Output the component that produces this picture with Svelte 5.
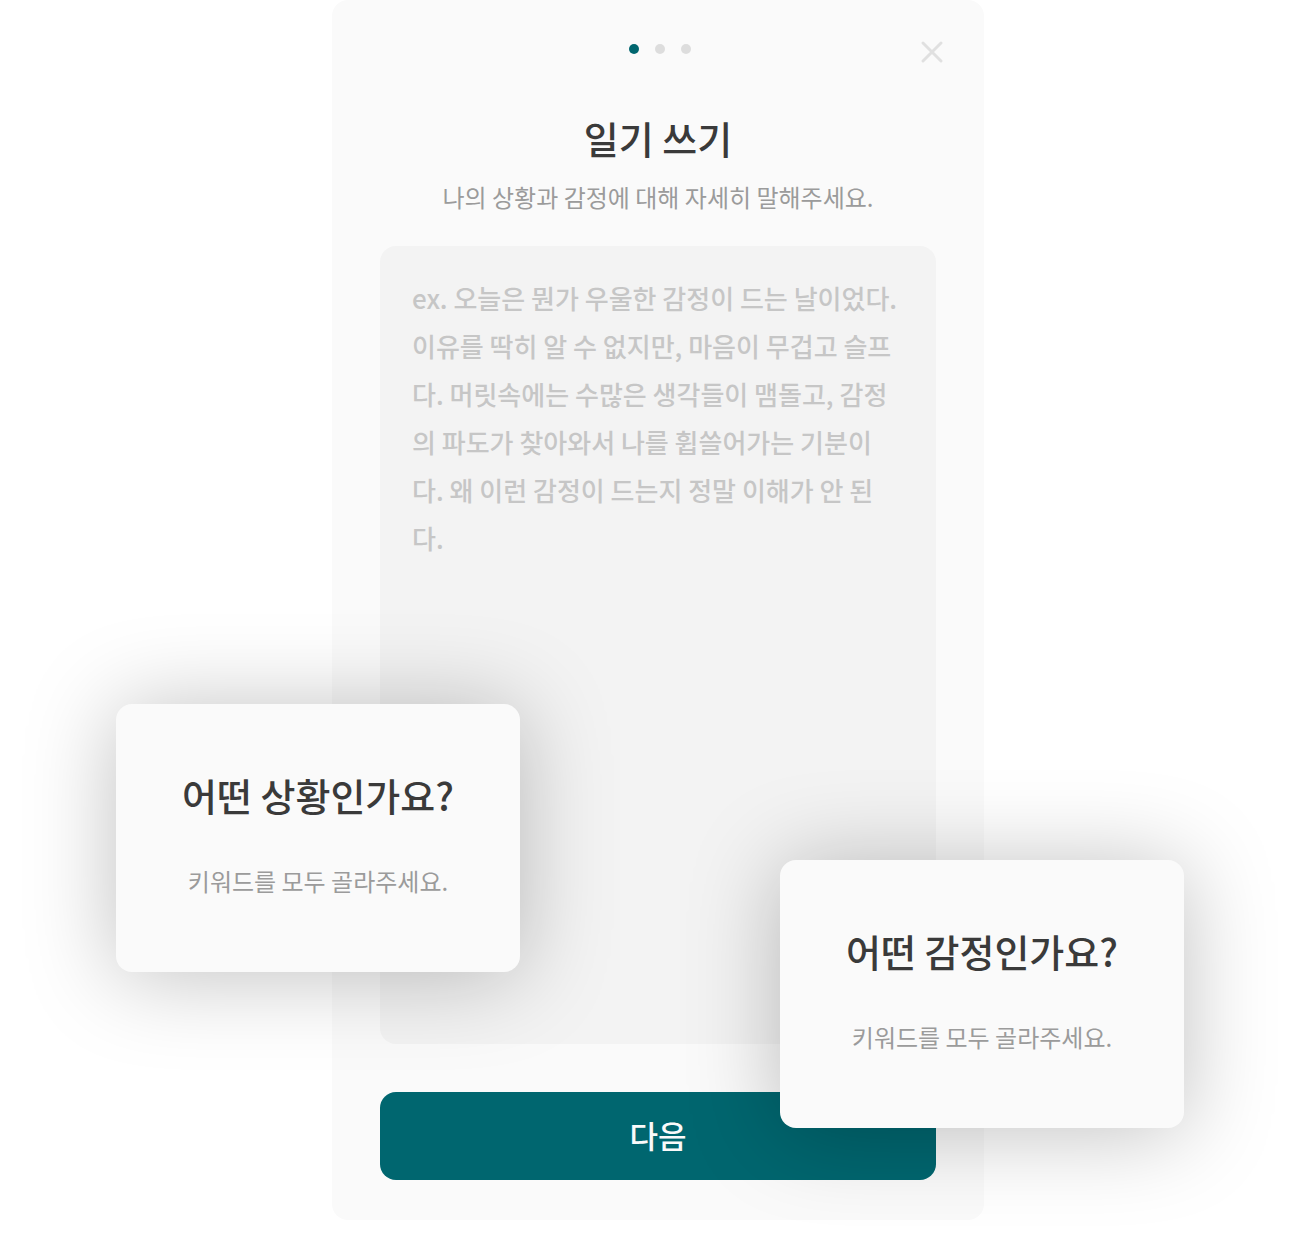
<script>
  const hint = 'ex. 오늘은 뭔가 우울한 감정이 드는 날이었다. 이유를 딱히 알 수 없지만, 마음이 무겁고 슬프다. 머릿속에는 수많은 생각들이 맴돌고, 감정의 파도가 찾아와서 나를 휩쓸어가는 기분이다. 왜 이런 감정이 드는지 정말 이해가 안 된다.';
  const cards = [
    { side: 'left', title: '어떤 상황인가요?' },
    { side: 'right', title: '어떤 감정인가요?' }
  ];
</script>

<div class="stage">
  <main class="sheet">
    <header class="top">
      <div class="dots" aria-hidden="true">
        <span class="dot active"></span><span class="dot"></span><span class="dot"></span>
      </div>
      <button class="close" type="button" aria-label="닫기">
        <svg viewBox="0 0 24 24" width="24" height="24"><path d="M3 3L21 21M21 3L3 21" /></svg>
      </button>
    </header>
    <h1>일기 쓰기</h1>
    <label class="sub" for="diary">나의 상황과 감정에 대해 자세히 말해주세요.</label>
    <textarea id="diary" placeholder={hint}></textarea>
    <button class="next" type="button">다음</button>
  </main>
  {#each cards as card}
    <section class="card {card.side}">
      <h2>{card.title}</h2>
      <p>키워드를 모두 골라주세요.</p>
    </section>
  {/each}
</div>

<style>
  :global(body) {
    background: #fff;
  }
  .stage {
    position: relative;
    max-width: 1300px;
    margin: 0 auto;
    padding: 0 316px 28px 332px;
    box-sizing: border-box;
    overflow: hidden;
    font-family: "Noto Sans CJK KR", sans-serif;
    color: #3a3a3a;
  }
  .sheet {
    display: flex;
    flex-direction: column;
    padding: 36px 48px 40px;
    background: #fafafa;
    border-radius: 16px;
  }
  .top {
    display: grid;
    grid-template-columns: 1fr auto 1fr;
    align-items: center;
    height: 32px;
    margin-right: -4px;
  }
  .dots {
    grid-column: 2;
    display: flex;
    gap: 16px;
    margin-bottom: 6px;
  }
  .dot {
    width: 10px;
    height: 10px;
    border-radius: 50%;
    background: #ddd;
  }
  .dot.active {
    background: #00666f;
  }
  .close {
    justify-self: end;
    display: flex;
    margin-right: -4px;
    padding: 0;
    border: 0;
    background: none;
  }
  .close path {
    fill: none;
    stroke: #e0e0e0;
    stroke-width: 3;
    stroke-linecap: round;
  }
  h1,
  h2,
  p {
    margin: 0;
    text-align: center;
  }
  h1,
  h2 {
    font-size: 38px;
    line-height: 56px;
    font-weight: 500;
    white-space: nowrap;
  }
  h1 {
    margin-top: 42px;
  }
  .sub,
  p {
    font-size: 24px;
    line-height: 36px;
    color: #9b9b9b;
    text-align: center;
    white-space: nowrap;
  }
  .sub {
    margin: 13px 0 31px;
  }
  textarea {
    height: 798px;
    padding: 28px 38px 28px 32px;
    box-sizing: border-box;
    border: 0;
    border-radius: 16px;
    resize: none;
    background: #f3f3f3;
    font-family: "Noto Sans CJK KR", sans-serif;
    font-size: 26px;
    font-weight: 500;
    line-height: 48px;
    word-break: break-all;
  }
  textarea::placeholder {
    color: #c6c6c6;
    opacity: 1;
  }
  .next {
    margin-top: 48px;
    height: 88px;
    padding: 0 0 4px;
    border: 0;
    border-radius: 16px;
    background: #00666f;
    color: #fafafa;
    font-family: inherit;
    font-size: 31px;
    font-weight: 500;
  }
  .card {
    position: absolute;
    width: 404px;
    padding: 63px 32px 73px;
    box-sizing: border-box;
    border-radius: 16px;
    background: #fafafa;
    box-shadow: 0 4px 90px rgba(0, 0, 0, 0.25);
  }
  .card p {
    margin-top: 40px;
  }
  .left {
    top: 704px;
    left: 116px;
  }
  .right {
    top: 860px;
    right: 116px;
  }
</style>
